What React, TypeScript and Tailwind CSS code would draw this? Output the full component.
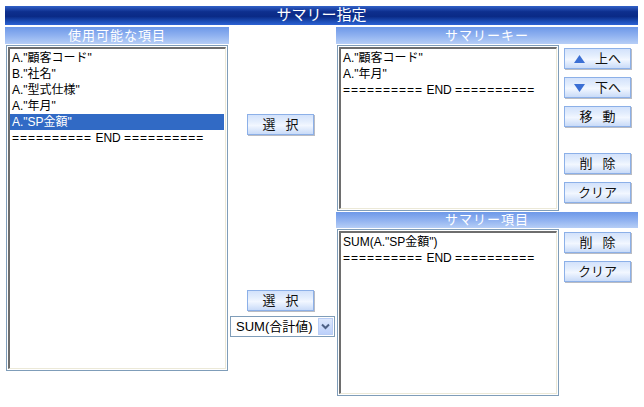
import React from "react";

const font = { fontFamily: "'Liberation Sans', 'Noto Sans CJK JP', sans-serif" };

const Header = ({ label, h = "h-[17px]" }: { label: string; h?: string }) => (
  <div
    className={`${h} flex items-center justify-center text-[13px] tracking-[1px] text-white bg-[linear-gradient(to_bottom,#6d98e8_0%,#8fb1f0_50%,#b6cef6_100%)]`}
  >
    {label}
  </div>
);

const ListBox = ({
  items,
  selected,
  className,
}: {
  items: string[];
  selected?: number;
  className: string;
}) => (
  <div className={`border border-[#7f9db9] bg-white p-[1px] ${className}`}>
    <div className="h-full border-t-2 border-l-2 border-t-[#6e6e6e] border-l-[#6e6e6e] border-b border-r border-b-[#ece9d8] border-r-[#ece9d8] pt-[1px] pr-[1px]">
      {items.map((it, i) => (
        <div
          key={i}
          className={`h-[16px] leading-[16px] text-[12px] pl-[2px] whitespace-nowrap ${
            i === selected ? "bg-[#316ac5] text-white" : "text-black"
          }`}
        >
          {it}
        </div>
      ))}
      <div className="h-[16px] leading-[16px] text-[12px] pl-[2px] whitespace-nowrap text-black">
        <span className="tracking-[1px]">==========</span> END{" "}
        <span className="tracking-[1px]">==========</span>
      </div>
    </div>
  </div>
);

const Btn = ({ children, className = "" }: { children: React.ReactNode; className?: string }) => (
  <div
    className={`w-[67px] h-[21px] flex items-center justify-center gap-[10px] text-[13px] text-[#111] border border-[#8cb0e8] shadow-[1px_1px_0_#b9bcc4] bg-[linear-gradient(to_bottom,#d3e2fb_0%,#e4eefd_35%,#f2f7ff_55%,#c9dbf8_100%)] ${className}`}
  >
    {children}
  </div>
);

const Tri = ({ up }: { up?: boolean }) => (
  <svg width="11" height="8" viewBox="0 0 11 8">
    <polygon points={up ? "5.5,0 11,8 0,8" : "0,0 11,0 5.5,8"} fill="#3b6fd4" />
  </svg>
);

export default function App() {
  return (
    <div className="w-[644px] h-[407px] bg-white pt-[6px]" style={font}>
      <div className="mx-[5px] w-[633px] h-[19px] flex items-center justify-center text-white text-[15px] bg-[linear-gradient(to_bottom,#3262c8_0%,#0e2f8e_30%,#0a2a86_55%,#1c4cb4_80%,#2d62d4_100%)]">
        サマリー指定
      </div>

      <div className="flex mt-[2px] pl-[5px]">
        {/* 使用可能な項目 */}
        <div className="w-[224px] flex flex-col">
          <Header label="使用可能な項目" />
          <ListBox
            className="ml-[1px] mt-[1px] w-[222px] h-[326px]"
            items={['A."顧客コード"', 'B."社名"', 'A."型式仕様"', 'A."年月"', 'A."SP金額"']}
            selected={4}
          />
        </div>

        {/* middle */}
        <div className="w-[107px] flex flex-col pl-[1px]">
          <Btn className="ml-[17px] mt-[87px]">
            <span>選</span>
            <span>択</span>
          </Btn>
          <Btn className="ml-[17px] mt-[155px]">
            <span>選</span>
            <span>択</span>
          </Btn>
          <div className="mt-[5px] w-[105px] h-[21px] border border-[#7f9db9] bg-white flex items-center justify-between pl-[5px] pr-[1px]">
            <span className="text-[13px] text-black whitespace-nowrap">SUM(合計値)</span>
            <div className="w-[15px] h-[17px] flex items-center justify-center border border-[#b9cdf5] bg-[linear-gradient(to_bottom,#dde8fd,#bcd0fa)]">
              <svg width="9" height="7" viewBox="0 0 9 7">
                <polyline points="1,1.5 4.5,5 8,1.5" fill="none" stroke="#4d6185" strokeWidth="2" />
              </svg>
            </div>
          </div>
        </div>

        {/* right */}
        <div className="w-[302px] flex flex-col">
          <Header label="サマリーキー" />
          <div className="flex">
            <ListBox
              className="ml-[1px] mt-[1px] w-[222px] h-[166px]"
              items={['A."顧客コード"', 'A."年月"']}
            />
            <div className="flex flex-col ml-[5px]">
              <Btn className="mt-[4px]">
                <Tri up />
                <span>上へ</span>
              </Btn>
              <Btn className="mt-[8px]">
                <Tri />
                <span>下へ</span>
              </Btn>
              <Btn className="mt-[8px]">
                <span>移</span>
                <span>動</span>
              </Btn>
              <Btn className="mt-[26px]">
                <span>削</span>
                <span>除</span>
              </Btn>
              <Btn className="mt-[8px]">
                <span>クリア</span>
              </Btn>
            </div>
          </div>
          <div className="mt-[1px]">
            <Header label="サマリー項目" h="h-[16px]" />
          </div>
          <div className="flex">
            <ListBox
              className="ml-[1px] mt-[1px] w-[222px] h-[167px]"
              items={['SUM(A."SP金額")']}
            />
            <div className="flex flex-col ml-[5px]">
              <Btn className="mt-[4px]">
                <span>削</span>
                <span>除</span>
              </Btn>
              <Btn className="mt-[8px]">
                <span>クリア</span>
              </Btn>
            </div>
          </div>
        </div>
      </div>
    </div>
  );
}
